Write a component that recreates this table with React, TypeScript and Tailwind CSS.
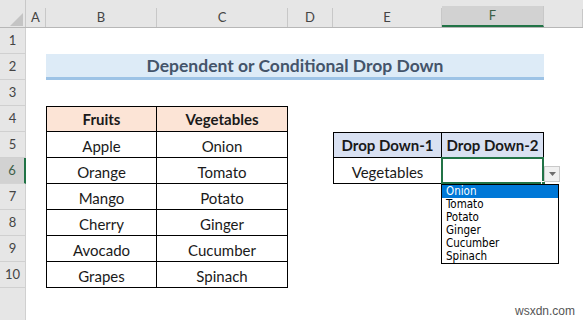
import { Fragment } from "react";

const columns = [
  { label: "A", width: "w-[20px]" },
  { label: "B", width: "w-[111px]" },
  { label: "C", width: "w-[131px]" },
  { label: "D", width: "w-[45px]" },
  { label: "E", width: "w-[109px]" },
  { label: "F", width: "w-[102px]", active: true },
  { label: "", width: "flex-1" },
];

const rows = [1, 2, 3, 4, 5, 6, 7, 8, 9, 10];

const produce = [
  ["Apple", "Onion"],
  ["Orange", "Tomato"],
  ["Mango", "Potato"],
  ["Cherry", "Ginger"],
  ["Avocado", "Cucumber"],
  ["Grapes", "Spinach"],
];

const options = ["Onion", "Tomato", "Potato", "Ginger", "Cucumber", "Spinach"];

export default function App() {
  return (
    <div className="relative h-[320px] w-[583px] overflow-hidden bg-white font-['Lato',sans-serif] text-[#1a1a1a]">
      {/* column headers */}
      <div className="flex h-[28px] border-b border-[#b7b7b7] bg-[#e6e6e6] text-[13px] text-[#444]">
        <div className="flex w-[26px] items-end justify-end border-r border-[#c8c8c8] pb-[1px] pr-[2px]">
          <svg width="13" height="13" viewBox="0 0 13 13">
            <polygon points="13,0 13,13 0,13" fill="#c4c4c4" />
          </svg>
        </div>
        {columns.map((c) => (
          <div key={c.label || "g"} className={`${c.width} flex flex-col`}>
            <div className="h-[9px]" />
            <div
              className={
                c.active
                  ? "flex flex-1 items-center justify-center border-r border-b-2 border-r-[#c8c8c8] border-b-[#217346] bg-[#d2d2d2] text-[#3b5e47]"
                  : "flex flex-1 items-center justify-center border-r border-[#c8c8c8]"
              }
            >
              {c.label}
            </div>
          </div>
        ))}
      </div>

      <div className="flex">
        {/* row headers */}
        <div className="flex w-[26px] flex-col bg-[#e6e6e6] text-[13px] text-[#444]">
          {rows.map((r) => (
            <div
              key={r}
              className={
                r === 6
                  ? "flex h-[26px] items-center justify-center border-b border-r-2 border-b-[#d4d4d4] border-r-[#217346] bg-[#d2d2d2] text-[#3b5e47]"
                  : "flex h-[26px] items-center justify-center border-b border-r border-[#d0d0d0]"
              }
            >
              {r}
            </div>
          ))}
          <div className="h-[40px] border-r border-[#d0d0d0]" />
        </div>

        {/* sheet */}
        <div className="grid flex-1 grid-cols-[20px_111px_131px_45px_109px_102px_1fr] grid-rows-[repeat(10,26px)]">
          <div className="col-span-5 col-start-2 row-start-2 flex items-center justify-center border-b-[3px] border-[#9dc3e6] bg-[#ddebf7] pt-[2px] text-[17.5px] font-bold text-[#44546a]">
            Dependent or Conditional Drop Down
          </div>

          {/* fruits / vegetables */}
          <div className="col-span-2 col-start-2 row-span-7 row-start-4 grid grid-cols-[110px_1fr] grid-rows-[25px_repeat(6,26px)] border-l border-t border-black text-[15px]">
            <div className="flex items-center justify-center border-b border-r border-black bg-[#fce4d6] pt-[1px] font-bold">
              Fruits
            </div>
            <div className="flex items-center justify-center border-b border-r border-black bg-[#fce4d6] pt-[1px] font-bold">
              Vegetables
            </div>
            {produce.map(([fruit, veg]) => (
              <Fragment key={fruit}>
                <div className="flex items-center justify-center border-b border-r border-black pt-[3px]">{fruit}</div>
                <div className="flex items-center justify-center border-b border-r border-black pt-[3px]">{veg}</div>
              </Fragment>
            ))}
          </div>

          {/* drop down cells */}
          <div className="col-span-2 col-start-5 row-span-2 row-start-5 grid grid-cols-[108px_1fr] grid-rows-[25px_26px] border-l border-t border-black text-[15px]">
            <div className="flex items-center justify-center border-b border-r border-black bg-[#d9e1f2] pt-[1px] font-bold">
              Drop Down-1
            </div>
            <div className="flex items-center justify-center border-b border-r border-black bg-[#d9e1f2] pt-[1px] font-bold">
              Drop Down-2
            </div>
            <div className="flex items-center justify-center border-b border-r border-black pt-[3px]">Vegetables</div>
            <div className="relative border-b border-r border-black">
              <div className="absolute -left-px -top-px h-[27px] w-[103px] border-2 border-[#217346]" />
              <div className="absolute -bottom-[3px] -right-[3px] h-[5px] w-[5px] border border-white bg-[#217346]" />
              <div className="absolute left-[calc(100%+1px)] top-[8px] flex h-[16px] w-[16px] items-center justify-center border border-[#c9c9c9] bg-[#f0f0f0]">
                <svg width="7" height="4" viewBox="0 0 7 4">
                  <polygon points="0,0 7,0 3.5,4" fill="#6d6d6d" />
                </svg>
              </div>
              <ul className="absolute left-[-1px] top-[calc(100%+1px)] z-10 w-[118px] border border-black bg-white font-['DejaVu_Sans_Condensed','DejaVu_Sans',sans-serif] text-[11.5px] leading-[13px] text-black">
                {options.map((o, i) => (
                  <li key={o} className={i === 0 ? "bg-[#0078d7] pl-[4px] text-white" : "pl-[4px]"}>
                    {o}
                  </li>
                ))}
              </ul>
            </div>
          </div>
        </div>
      </div>

      <span className="absolute bottom-0 right-[8px] font-['Liberation_Sans',sans-serif] text-[12px] text-[#555]">
        wsxdn.com
      </span>
    </div>
  );
}
